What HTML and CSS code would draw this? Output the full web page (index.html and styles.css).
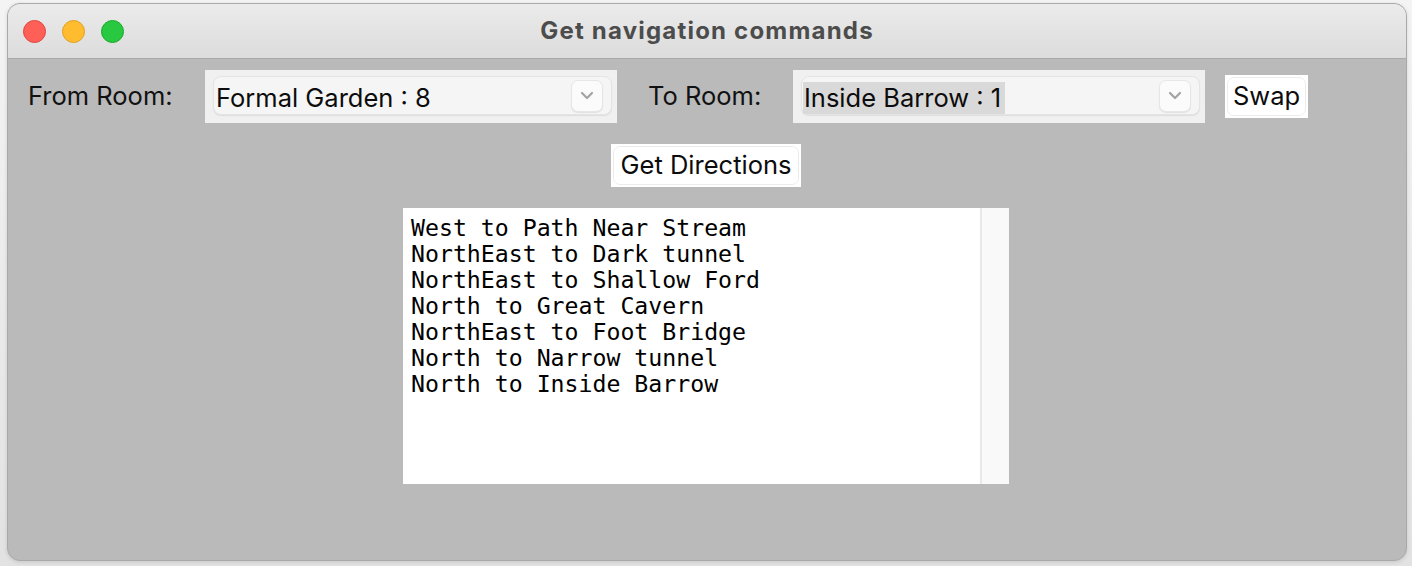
FILE: index.html
```html
<!DOCTYPE html>
<html>
<head>
<meta charset="utf-8">
<link rel="stylesheet" href="styles.css">
</head>
<body>
<div class="window">
  <div class="titlebar">
    <div class="lights">
      <span class="light red"></span>
      <span class="light yellow"></span>
      <span class="light green"></span>
    </div>
    <div class="title">Get navigation commands</div>
  </div>
  <div class="content">
    <div class="row">
      <div class="label label-from">From Room:</div>
      <div class="combo">
        <div class="combo-inner">
          <span class="combo-text">Formal Garden : 8</span>
          <span class="arrow"><svg width="14" height="9" viewBox="0 0 14 9"><path d="M2 2 L7 7 L12 2" fill="none" stroke="#a3a3a3" stroke-width="2.2" stroke-linecap="round" stroke-linejoin="round"/></svg></span>
        </div>
      </div>
      <div class="label label-to">To Room:</div>
      <div class="combo">
        <div class="combo-inner">
          <span class="combo-text selected">Inside Barrow : 1</span>
          <span class="arrow"><svg width="14" height="9" viewBox="0 0 14 9"><path d="M2 2 L7 7 L12 2" fill="none" stroke="#a3a3a3" stroke-width="2.2" stroke-linecap="round" stroke-linejoin="round"/></svg></span>
        </div>
      </div>
      <div class="btn swap"><span class="btn-inner">Swap</span></div>
    </div>
    <div class="center-row">
      <div class="btn directions"><span class="btn-inner">Get Directions</span></div>
    </div>
    <div class="center-row">
      <div class="textarea">
        <div class="lines">
          <div>West to Path Near Stream</div>
          <div>NorthEast to Dark tunnel</div>
          <div>NorthEast to Shallow Ford</div>
          <div>North to Great Cavern</div>
          <div>NorthEast to Foot Bridge</div>
          <div>North to Narrow tunnel</div>
          <div>North to Inside Barrow</div>
        </div>
        <div class="scrollbar"></div>
      </div>
    </div>
  </div>
</div>
</body>
</html>
```

FILE: styles.css
```css
html, body {
  margin: 0;
  padding: 0;
}
body {
  width: 1412px;
  height: 566px;
  background: linear-gradient(#f4f4f4, #e2e2e2);
  overflow: hidden;
  font-family: Inter, "Liberation Sans", Arial, sans-serif;
}
.window {
  box-sizing: border-box;
  margin: 3px 0 0 7px;
  width: 1400px;
  height: 558px;
  border: 1px solid #a9a9a9;
  border-radius: 13px;
  overflow: hidden;
  background: #bababa;
  display: flex;
  flex-direction: column;
  box-shadow: 0 1px 4px rgba(0,0,0,0.12);
}
.titlebar {
  height: 54px;
  flex: none;
  background: linear-gradient(#ebebeb, #dcdcdc);
  border-bottom: 1px solid #a9a9a9;
  display: flex;
  align-items: center;
  position: relative;
}
.lights {
  display: flex;
  gap: 16px;
  padding-left: 15px;
}
.light {
  width: 23px;
  height: 23px;
  border-radius: 50%;
  box-sizing: border-box;
}
.red { background: #fe5f57; border: 1px solid #e0443e; }
.yellow { background: #febc2e; border: 1px solid #dea123; }
.green { background: #28c840; border: 1px solid #1aab29; }
.title {
  position: absolute;
  left: 0;
  right: 0;
  text-align: center;
  font-weight: bold;
  font-size: 24px;
  letter-spacing: 1.2px;
  color: #4c4c4c;
  top: 12px;
}
.content {
  flex: 1;
  padding-top: 11px;
  display: flex;
  flex-direction: column;
}
.row {
  display: flex;
  align-items: center;
  padding-left: 20px;
}
.label {
  font-size: 25.5px;
  color: #111;
  flex: none;
  margin-top: -2px;
}
.label-from { width: 177px; }
.label-to { width: 145px; margin-left: 31px; }
.combo {
  width: 412px;
  height: 53px;
  background: #f0f0f0;
  box-sizing: border-box;
  padding: 6px 5px 8px 8px;
  flex: none;
}
.combo-inner {
  height: 39px;
  box-sizing: border-box;
  border: 1px solid #e4e4e4;
  border-radius: 8px;
  background: #f5f5f5;
  box-shadow: 0 1px 1px rgba(0,0,0,0.08);
  display: flex;
  align-items: center;
  justify-content: space-between;
  padding: 0 8px 0 1px;
}
.combo-text {
  font-size: 25.5px;
  color: #0c0c0c;
  line-height: 32px;
  padding: 0 1px;
  margin-top: 4px;
}
.combo-text.selected {
  background: #d9d9d9;
  padding-right: 4px;
}
.arrow {
  width: 32px;
  height: 32px;
  box-sizing: border-box;
  border: 1px solid #e6e6e6;
  border-radius: 7px;
  background: #fbfbfb;
  box-shadow: 0 1px 1px rgba(0,0,0,0.08);
  display: flex;
  align-items: center;
  justify-content: center;
}
.btn {
  background: #ffffff;
  height: 43px;
  box-sizing: border-box;
  padding: 2px;
  display: flex;
  flex: none;
}
.btn-inner {
  flex: 1;
  border: 1px solid #ececec;
  border-radius: 7px;
  font-size: 25.5px;
  color: #0c0c0c;
  display: flex;
  align-items: center;
  justify-content: center;
  padding-bottom: 2px;
}
.swap {
  width: 83px;
  margin-left: 20px;
}
.center-row {
  display: flex;
  justify-content: center;
  padding-right: 2px;
}
.directions {
  width: 190px;
  margin-top: 21px;
}
.textarea {
  width: 606px;
  height: 276px;
  margin-top: 21px;
  background: #ffffff;
  display: flex;
}
.lines {
  flex: 1;
  padding: 7px 0 0 8px;
  font-family: "DejaVu Sans Mono", monospace;
  font-size: 23.2px;
  line-height: 26px;
  color: #000;
  white-space: nowrap;
}
.scrollbar {
  width: 27px;
  background: #f9f9f9;
  border-left: 2px solid #e8e8e8;
}
```
